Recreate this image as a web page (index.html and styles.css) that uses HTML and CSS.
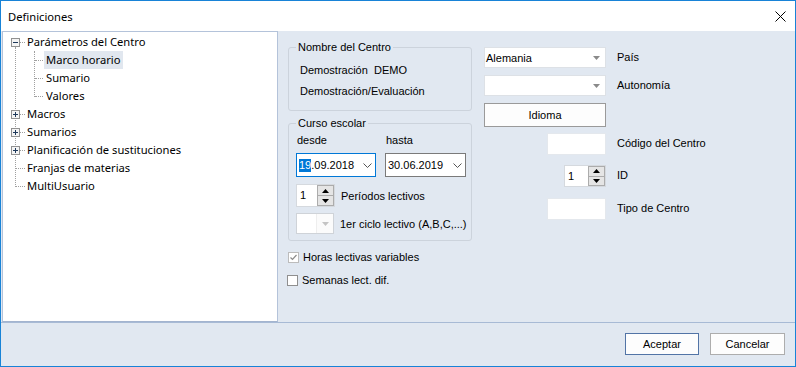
FILE: index.html
```html
<!DOCTYPE html>
<html>
  <head>
    <title>Definiciones</title>
    <link rel="stylesheet" href="styles.css">
  </head>
  <body>
    <div class="window">
      <div class="titlebar">
        <span class="title">Definiciones</span>
        <svg class="close" width="11" height="11" viewBox="0 0 11 11">
          <path d="M0.5 0.5 L10.5 10.5 M10.5 0.5 L0.5 10.5" stroke="#000" stroke-width="1" fill="none"/>
        </svg>
      </div>

      <div class="main">
        <div class="tree-panel">
          <ul class="tree">
            <li>
              <div class="row root-row">
                <span class="gutter has-toggle">
                  <svg class="toggle" width="9" height="9" viewBox="0 0 9 9">
                    <rect x="0.5" y="0.5" width="8" height="8" fill="#f4f4f4" stroke="#919191"/>
                    <path d="M2 4.5 H7" stroke="#1e395b"/>
                  </svg>
                </span>
                <span class="label">Parámetros del Centro</span>
              </div>
              <ul class="children">
                <li><div class="row child-row"><span class="label selected">Marco horario</span></div></li>
                <li><div class="row child-row"><span class="label">Sumario</span></div></li>
                <li><div class="row child-row"><span class="label">Valores</span></div></li>
              </ul>
            </li>
            <li>
              <div class="row root-row">
                <span class="gutter has-toggle">
                  <svg class="toggle" width="9" height="9" viewBox="0 0 9 9">
                    <rect x="0.5" y="0.5" width="8" height="8" fill="#f4f4f4" stroke="#919191"/>
                    <path d="M2 4.5 H7 M4.5 2 V7" stroke="#1e395b"/>
                  </svg>
                </span>
                <span class="label">Macros</span>
              </div>
            </li>
            <li>
              <div class="row root-row">
                <span class="gutter has-toggle">
                  <svg class="toggle" width="9" height="9" viewBox="0 0 9 9">
                    <rect x="0.5" y="0.5" width="8" height="8" fill="#f4f4f4" stroke="#919191"/>
                    <path d="M2 4.5 H7 M4.5 2 V7" stroke="#1e395b"/>
                  </svg>
                </span>
                <span class="label">Sumarios</span>
              </div>
            </li>
            <li>
              <div class="row root-row">
                <span class="gutter has-toggle">
                  <svg class="toggle" width="9" height="9" viewBox="0 0 9 9">
                    <rect x="0.5" y="0.5" width="8" height="8" fill="#f4f4f4" stroke="#919191"/>
                    <path d="M2 4.5 H7 M4.5 2 V7" stroke="#1e395b"/>
                  </svg>
                </span>
                <span class="label">Planificación de sustituciones</span>
              </div>
            </li>
            <li>
              <div class="row root-row">
                <span class="gutter leaf"></span>
                <span class="label">Franjas de materias</span>
              </div>
            </li>
            <li>
              <div class="row root-row">
                <span class="gutter leaf"></span>
                <span class="label">MultiUsuario</span>
              </div>
            </li>
          </ul>
        </div>

        <div class="pane">
          <div class="col-left">
            <fieldset class="group group-name">
              <legend>Nombre del Centro</legend>
              <div class="line">Demostración&nbsp; DEMO</div>
              <div class="line">Demostración/Evaluación</div>
            </fieldset>

            <fieldset class="group group-year">
              <legend>Curso escolar</legend>
              <div class="dates">
                <span>desde</span>
                <span>hasta</span>
                <div class="datebox focused">
                  <span class="sel">19</span>.09.2018
                  <svg class="chev" width="9" height="5" viewBox="0 0 9 5"><path d="M0.5 0.5 L4.5 4.5 L8.5 0.5" stroke="#555" fill="none"/></svg>
                </div>
                <div class="datebox">
                  30.06.2019
                  <svg class="chev" width="9" height="5" viewBox="0 0 9 5"><path d="M0.5 0.5 L4.5 4.5 L8.5 0.5" stroke="#555" fill="none"/></svg>
                </div>
              </div>
              <div class="inline-row spin-row">
                <div class="spin spin-small">
                  <span class="value">1</span>
                  <div class="spin-btns">
                    <span class="spin-btn"><svg width="7" height="4" viewBox="0 0 7 4"><path d="M0 4 L3.5 0 L7 4 Z" fill="#000"/></svg></span>
                    <span class="spin-btn"><svg width="7" height="4" viewBox="0 0 7 4"><path d="M0 0 L3.5 4 L7 0 Z" fill="#000"/></svg></span>
                  </div>
                </div>
                <span>Períodos lectivos</span>
              </div>
              <div class="inline-row cycle-row">
                <div class="combo combo-disabled">
                  <span class="combo-text"></span>
                  <span class="combo-arrow"><svg width="7" height="4" viewBox="0 0 7 4"><path d="M0 0 L3.5 4 L7 0 Z" fill="#c4c4c4"/></svg></span>
                </div>
                <span>1er ciclo lectivo (A,B,C,...)</span>
              </div>
            </fieldset>

            <label class="check">
              <span class="box checked">
                <svg width="9" height="9" viewBox="0 0 9 9"><path d="M1.5 4.5 L3.5 6.5 L7.5 2" stroke="#8c8c8c" stroke-width="1.2" fill="none"/></svg>
              </span>
              Horas lectivas variables
            </label>
            <label class="check">
              <span class="box"></span>
              Semanas lect. dif.
            </label>
          </div>

          <div class="col-right">
            <div class="combo">
              <span class="combo-text">Alemania</span>
              <span class="combo-arrow"><svg width="7" height="4" viewBox="0 0 7 4"><path d="M0 0 L3.5 4 L7 0 Z" fill="#8a8a8a"/></svg></span>
            </div>
            <span class="field-label">País</span>

            <div class="combo">
              <span class="combo-text"></span>
              <span class="combo-arrow"><svg width="7" height="4" viewBox="0 0 7 4"><path d="M0 0 L3.5 4 L7 0 Z" fill="#8a8a8a"/></svg></span>
            </div>
            <span class="field-label">Autonomía</span>

            <button class="btn btn-wide">Idioma</button>
            <span></span>

            <div class="textbox"></div>
            <span class="field-label">Código del Centro</span>

            <div class="spin spin-id">
              <span class="value">1</span>
              <div class="spin-btns">
                <span class="spin-btn"><svg width="7" height="4" viewBox="0 0 7 4"><path d="M0 4 L3.5 0 L7 4 Z" fill="#000"/></svg></span>
                <span class="spin-btn"><svg width="7" height="4" viewBox="0 0 7 4"><path d="M0 0 L3.5 4 L7 0 Z" fill="#000"/></svg></span>
              </div>
            </div>
            <span class="field-label">ID</span>

            <div class="textbox"></div>
            <span class="field-label">Tipo de Centro</span>
          </div>
        </div>
      </div>

      <div class="footer">
        <button class="btn btn-default">Aceptar</button>
        <button class="btn">Cancelar</button>
      </div>
    </div>
  </body>
</html>
```

FILE: styles.css
```css
* {
  box-sizing: border-box;
}

body {
  margin: 0;
  font-family: "Liberation Sans", Arial, sans-serif;
  font-size: 11px;
  color: #000;
}

.window {
  width: 796px;
  height: 367px;
  border: 1px solid #1883d7;
  background: #e1e8f1;
  display: flex;
  flex-direction: column;
}

.titlebar {
  height: 30px;
  background: #fff;
  display: flex;
  align-items: center;
  padding: 0 9px 0 7px;
  font-family: "Noto Sans", sans-serif;
  font-size: 11.2px;
}

.titlebar .close {
  margin-left: auto;
}

.main {
  height: 291px;
  display: flex;
}

/* tree on the left */

.tree-panel {
  width: 276px;
  margin-left: 1px;
  background: #fff;
  border: 1px solid #b4c3da;
  border-bottom-color: #a3b4cf;
}

.tree,
.tree ul {
  list-style: none;
  margin: 0;
  padding: 0;
  position: relative;
}

.tree {
  padding-top: 1px;
  font-family: "Noto Sans", sans-serif;
  font-size: 11.2px;
}

.tree::before {
  content: "";
  position: absolute;
  left: 12px;
  top: 15px;
  bottom: 8px;
  border-left: 1px dotted #a0a0a0;
}

.row {
  height: 18px;
  display: flex;
  align-items: center;
  position: relative;
}

.gutter {
  width: 24px;
  height: 18px;
  display: flex;
  align-items: center;
  padding-left: 8px;
  position: relative;
}

.gutter::after {
  content: "";
  position: absolute;
  top: 9px;
  border-top: 1px dotted #a0a0a0;
}

.gutter.has-toggle::after {
  left: 17px;
  width: 5px;
}

.gutter.leaf::after {
  left: 13px;
  width: 9px;
}

.toggle {
  position: relative;
  z-index: 1;
}

.label {
  line-height: 18px;
  padding: 0 2px;
  white-space: nowrap;
}

.root-row .label {
  padding-left: 0;
}

.children::before {
  content: "";
  position: absolute;
  left: 31px;
  top: 0;
  bottom: 8px;
  border-left: 1px dotted #a0a0a0;
}

.child-row {
  padding-left: 41px;
}

.child-row::before {
  content: "";
  position: absolute;
  left: 32px;
  top: 9px;
  width: 8px;
  border-top: 1px dotted #a0a0a0;
}

.selected {
  background: #e1e7ef;
}

/* right side */

.pane {
  flex: 1;
  display: flex;
  gap: 12px;
  padding: 9px 0 0 10px;
}

.col-left {
  width: 184px;
  flex-shrink: 0;
}

.group {
  margin: 0;
  border: 1px solid #ccd3dc;
  border-radius: 3px;
  padding: 0 6px 8px 7px;
  min-width: 0;
}

.group legend {
  padding: 0 2px;
  line-height: 14px;
}

.group-name {
  padding-top: 6px;
}

.group-name .line {
  line-height: 21px;
  padding-left: 4px;
}

.group-year {
  margin-top: 5px;
  padding-top: 3px;
  padding-bottom: 6px;
}

.dates {
  display: grid;
  grid-template-columns: 80px 81px;
  column-gap: 9px;
  row-gap: 6px;
  line-height: 14px;
}

.dates > span {
  padding-left: 1px;
}

.datebox {
  height: 24px;
  background: #fff;
  border: 1px solid #7a7a7a;
  display: flex;
  align-items: center;
  padding: 0 3px 0 2px;
}

.datebox.focused {
  border-color: #0078d7;
}

.datebox .sel {
  background: #0078d7;
  color: #fff;
  line-height: 13px;
}

.datebox .chev {
  margin-left: auto;
}

.inline-row {
  display: flex;
  align-items: center;
  gap: 6px;
  white-space: nowrap;
}

.spin-row {
  margin-top: 7px;
}

.cycle-row {
  margin-top: 6px;
}

.spin {
  height: 23px;
  background: #fff;
  border: 1px solid #d5d9de;
  display: flex;
  align-items: stretch;
  flex-shrink: 0;
}

.spin-small {
  width: 39px;
}

.spin .value {
  flex: 1;
  line-height: 21px;
  padding-left: 3px;
}

.spin-btns {
  width: 17px;
  display: flex;
  flex-direction: column;
}

.spin-btn {
  flex: 1;
  border: 1px solid #acacac;
  background: #e5e5e5;
  display: flex;
  align-items: center;
  justify-content: center;
}

.spin-btn + .spin-btn {
  border-top: none;
}

.combo {
  height: 21px;
  background: #fff;
  border: 1px solid #dde1e6;
  display: flex;
  align-items: center;
  flex-shrink: 0;
}

.combo-text {
  flex: 1;
  padding-left: 1px;
}

.combo-arrow {
  width: 17px;
  display: flex;
  justify-content: center;
}

.combo-disabled {
  width: 38px;
  border-color: #cfd3d8;
}

.combo-disabled .combo-arrow {
  align-self: stretch;
  align-items: center;
  background: #fbfbfb;
  border-left: 1px solid #eeeeee;
}

.check {
  display: flex;
  align-items: center;
  gap: 4px;
  line-height: 14px;
  margin-top: 9px;
}

.check .box {
  width: 11px;
  height: 11px;
  background: #fff;
  border: 1px solid #8f8f8f;
  display: flex;
  align-items: center;
  justify-content: center;
}

.check .box.checked {
  border-color: #bcbcbc;
}

.check + .check .box {
  margin-left: -1px;
}

.col-right {
  display: grid;
  grid-template-columns: 122px auto;
  grid-template-rows: 28px 28px 30px 32px 33px 22px;
  column-gap: 11px;
  align-items: start;
  margin-top: 7px;
}

.field-label {
  line-height: 21px;
}

.textbox {
  width: 59px;
  height: 22px;
  justify-self: end;
  background: #fff;
  border: 1px solid #e4e8ed;
}

.spin-id {
  width: 42px;
  height: 22px;
  justify-self: end;
}

.btn {
  font-family: "Liberation Sans", Arial, sans-serif;
  font-size: 11px;
  color: #000;
  background: #fdfdfd;
  border: 1px solid #adadad;
  padding: 0;
  height: 22px;
}

.btn-wide {
  width: 122px;
  height: 24px;
  border-color: #9a9a9a;
}

.footer {
  height: 44px;
  border-top: 1px solid #a7bad5;
  display: flex;
  justify-content: flex-end;
  gap: 11px;
  padding: 10px 10px 0 0;
}

.footer .btn {
  width: 75px;
}

.footer .btn-default {
  width: 74px;
  border-color: #5274a6;
}
```
